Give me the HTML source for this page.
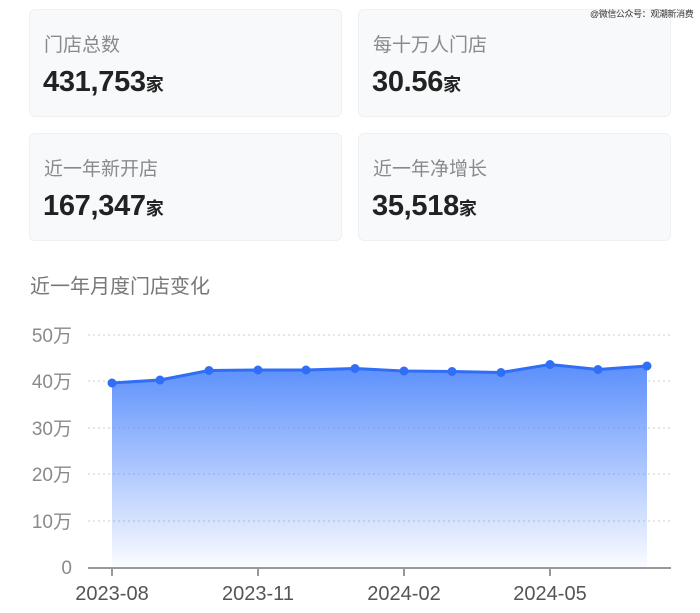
<!DOCTYPE html>
<html><head><meta charset="utf-8"><style>
body{margin:0;width:700px;height:613px;background:#fff;font-family:"Liberation Sans","Noto Sans CJK SC",sans-serif;position:relative;overflow:hidden}
.card{position:absolute;width:313px;height:108px;background:#f8f9fb;border:1px solid #eef0f3;border-radius:6px;box-sizing:border-box}
.t{position:absolute;left:14px;top:20px;font-size:19px;color:#8a8a8a}
.v{position:absolute;left:13px;top:56px;font-size:29px;font-weight:bold;color:#222;letter-spacing:-0.3px}
.v span{font-size:18px}
.wm{position:absolute;left:590px;top:7px;font-size:9px;color:#333;z-index:5;white-space:nowrap;letter-spacing:-0.4px}
.h{position:absolute;left:30px;top:270px;font-size:20px;color:#777}
</style></head><body>
<div class="card" style="left:29px;top:9px"><div class="t">门店总数</div><div class="v">431,753<span>家</span></div></div>
<div class="card" style="left:358px;top:9px"><div class="t">每十万人门店</div><div class="v">30.56<span>家</span></div></div>
<div class="card" style="left:29px;top:133px"><div class="t">近一年新开店</div><div class="v">167,347<span>家</span></div></div>
<div class="card" style="left:358px;top:133px"><div class="t">近一年净增长</div><div class="v">35,518<span>家</span></div></div>
<div class="wm">@微信公众号：观潮新消费</div>
<div class="h">近一年月度门店变化</div>
<svg width="700" height="613" style="position:absolute;left:0;top:0">
<defs><linearGradient id="g" x1="0" y1="0" x2="0" y2="1"><stop offset="0" stop-color="#5b8ffc"/><stop offset="1" stop-color="#5b8ffc" stop-opacity="0.03"/></linearGradient></defs>
<g stroke="#ccc" stroke-dasharray="2,3" stroke-width="1">
<line x1="88" y1="335" x2="670" y2="335"/><line x1="88" y1="381" x2="670" y2="381"/><line x1="88" y1="428" x2="670" y2="428"/><line x1="88" y1="474" x2="670" y2="474"/><line x1="88" y1="521" x2="670" y2="521"/></g>
<path d="M112 383 L160 380 L209 370.5 L258 370 L306 370 L355 368.5 L404 371 L452 371.5 L501 372.5 L550 364.5 L598 369.5 L647 366 L647 567 L112 567Z" fill="url(#g)"/>
<polyline points="112,383 160,380 209,370.5 258,370 306,370 355,368.5 404,371 452,371.5 501,372.5 550,364.5 598,369.5 647,366" fill="none" stroke="#2f6ef5" stroke-width="3" stroke-linejoin="round"/>
<g fill="#2f6ef5"><circle cx="112" cy="383" r="4.5"/><circle cx="160" cy="380" r="4.5"/><circle cx="209" cy="370.5" r="4.5"/><circle cx="258" cy="370" r="4.5"/><circle cx="306" cy="370" r="4.5"/><circle cx="355" cy="368.5" r="4.5"/><circle cx="404" cy="371" r="4.5"/><circle cx="452" cy="371.5" r="4.5"/><circle cx="501" cy="372.5" r="4.5"/><circle cx="550" cy="364.5" r="4.5"/><circle cx="598" cy="369.5" r="4.5"/><circle cx="647" cy="366" r="4.5"/></g>
<g stroke="#999" stroke-width="2"><line x1="88" y1="568" x2="671" y2="568"/><line x1="112" y1="568" x2="112" y2="576"/><line x1="258" y1="568" x2="258" y2="576"/><line x1="404" y1="568" x2="404" y2="576"/><line x1="550" y1="568" x2="550" y2="576"/></g>
<g font-size="19" fill="#8a8a8a" text-anchor="end" font-family="Liberation Sans,Noto Sans CJK SC,sans-serif">
<text x="72" y="342">50万</text><text x="72" y="388">40万</text><text x="72" y="435">30万</text><text x="72" y="481">20万</text><text x="72" y="528">10万</text><text x="72" y="574">0</text></g>
<g font-size="20" fill="#555" text-anchor="middle" font-family="Liberation Sans,sans-serif">
<text x="112" y="600">2023-08</text><text x="258" y="600">2023-11</text><text x="404" y="600">2024-02</text><text x="550" y="600">2024-05</text></g>
</svg>
</body></html>
